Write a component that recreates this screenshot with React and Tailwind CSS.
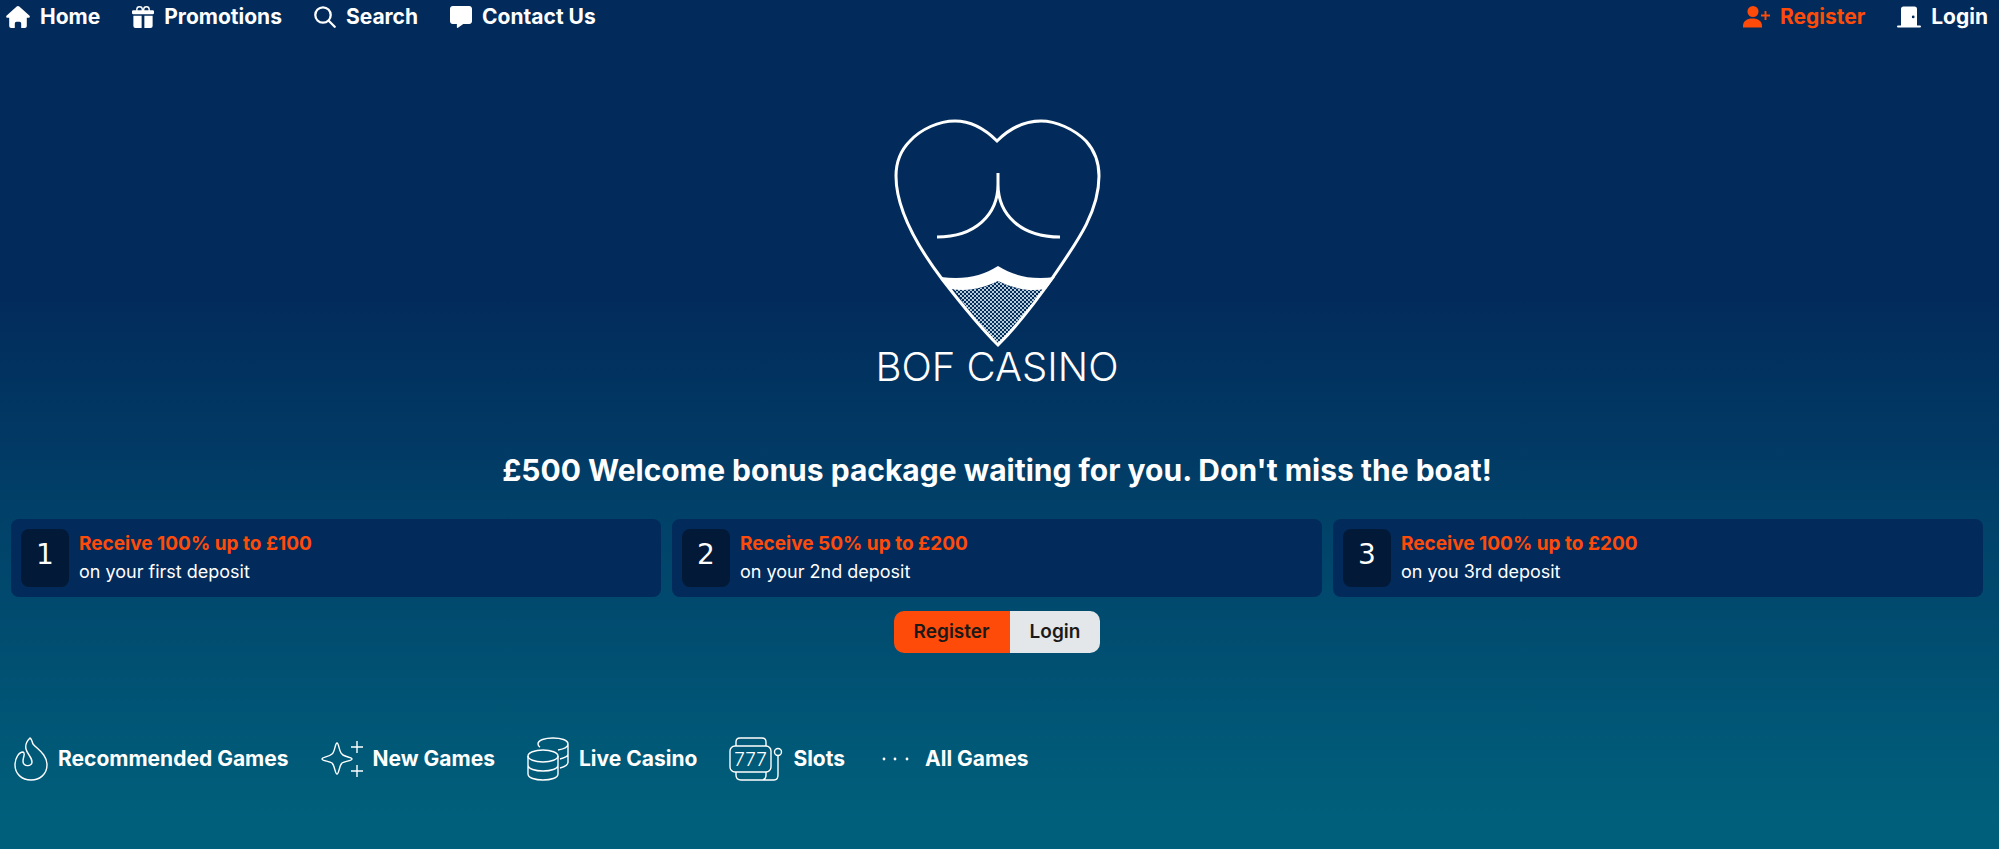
import { BsGiftFill } from "react-icons/bs"
import { FaMessage } from "react-icons/fa6"

const mainLinks = [
  { name: "Home", href: "#home", icon: <HomeIcon /> },
  { name: "Promotions", href: "#promotions", icon: <BsGiftFill size={22} /> },
  { name: "Search", href: "#search", icon: <SearchIcon /> },
  { name: "Contact Us", href: "#contact", icon: <FaMessage size={22} /> }
]

const offers = [
  { step: 1, title: "Receive 100% up to £100", text: "on your first deposit" },
  { step: 2, title: "Receive 50% up to £200", text: "on your 2nd deposit" },
  { step: 3, title: "Receive 100% up to £200", text: "on you 3rd deposit" }
]

const categories = [
  { name: "Recommended Games", href: "#recommended", icon: <FlameIcon /> },
  { name: "New Games", href: "#new", icon: <SparkIcon /> },
  { name: "Live Casino", href: "#live", icon: <ChipsIcon /> },
  { name: "Slots", href: "#slots", icon: <SlotsIcon /> },
  { name: "All Games", href: "#all", icon: <DotsIcon /> }
]

export default function App() {
  return (
    <div className="min-h-screen bg-[linear-gradient(to_bottom,#022b5b_0%,#022b5b_35%,#00607c_97%)] pr-[5px] font-[Inter,sans-serif] text-white">
      <header className="flex h-[34px] items-center justify-between px-1.5">
        <nav className="flex items-center gap-8">
          {mainLinks.map((link) => (
            <NavItem key={link.name} href={link.href} icon={link.icon}>
              {link.name}
            </NavItem>
          ))}
        </nav>
        <nav className="flex items-center gap-8">
          <NavItem href="#register" icon={<PersonPlusIcon />} accent>
            Register
          </NavItem>
          <NavItem href="#login" icon={<DoorIcon />}>
            Login
          </NavItem>
        </nav>
      </header>

      <main>
        <div className="flex flex-col items-center pt-[78px]">
          <Logo />
          <p className="text-[40px] leading-[38px] font-light">BOF CASINO</p>
        </div>

        <h1 className="mt-16 text-center text-3xl leading-10 font-bold">
          £500 Welcome bonus package waiting for you. Don't miss the boat!
        </h1>

        <section className="mt-7 grid grid-cols-3 gap-[11px] px-[11px] pt-px">
          {offers.map((offer) => (
            <OfferCard key={offer.step} {...offer} />
          ))}
        </section>

        <div className="mt-3.5 flex justify-center">
          <div className="flex overflow-hidden rounded-[10px] text-[19px] font-semibold text-[#1c1917]">
            <button className="h-[42px] bg-[#ff4b09] px-5">Register</button>
            <button className="h-[42px] bg-[#e3e7ea] px-5">Login</button>
          </div>
        </div>

        <nav className="mt-21 flex items-center gap-8 px-3.5 pb-16">
          {categories.map((category) => (
            <a key={category.name} href={category.href} className="flex items-center gap-2.5 text-[21px] font-bold">
              {category.icon}
              <span>{category.name}</span>
            </a>
          ))}
        </nav>
      </main>
    </div>
  )
}

function NavItem({ href, icon, children, accent }) {
  return (
    <a href={href} className={`flex items-center gap-2.5 text-[21px] font-bold ${accent ? "text-[#ff4b09]" : "text-white"}`}>
      {icon}
      <span>{children}</span>
    </a>
  )
}

function OfferCard({ step, title, text }) {
  return (
    <div className="flex items-center gap-2.5 rounded-lg bg-[#022b5b] px-2.5 py-2.5">
      <div className="flex h-[58px] w-12 items-center justify-center rounded-lg bg-[#021a38] pb-1.5 font-[DejaVu_Sans,sans-serif] text-[28px]">
        {step}
      </div>
      <div>
        <p className="text-[19px] leading-7 font-bold text-[#ff4b09]">{title}</p>
        <p className="text-lg leading-7">{text}</p>
      </div>
    </div>
  )
}

function Logo() {
  return (
    <svg width="288" height="236" viewBox="0 0 288 236" fill="none" stroke="white" strokeWidth="3" aria-hidden="true">
      <defs>
        <pattern id="lace" width="4" height="4" patternUnits="userSpaceOnUse">
          <path d="M0 0l4 4M4 0L0 4" strokeWidth="1" stroke="#b6cbd6" />
        </pattern>
      </defs>
      <path d="M100 176C118 180 132 176 145 169C158 176 172 180 192 176L176 198L145 232L114 196Z" fill="url(#lace)" stroke="none" />
      <path d="M88 165C112 168 129 164 145 154C161 164 178 168 202 165L193 177C174 180 160 176 145 169C130 176 116 180 98 177Z" fill="white" stroke="none" />
      <path d="M144 29C132 17 118 9 102 9C86 9 68 17 57 29C47 39 43 50 43 64C43 98 64 134 89 167C106 189 125 213 145 233C166 212 184 188 200 165C224 130 246 100 246 64C246 50 242 39 233 29C221 17 203 9 188 9C171 9 156 17 144 29Z" />
      <path d="M145 61V72C145 103 122 125 84 125M145 72C145 103 168 125 207 125" />
    </svg>
  )
}

function HomeIcon() {
  return (
    <svg width="24" height="22" viewBox="0 0 24 22" fill="currentColor">
      <path d="M10.700 .6Q12 -.5 13.300 .6L23.300 9.500Q24.600 11 22.800 11.800H20.800V20Q20.800 22 18.800 22H15.200V17.500Q15.200 15.700 13.500 15.700H10.500Q8.800 15.700 8.800 17.500V22H5.200Q3.200 22 3.200 20V11.800H1.200Q-.6 11 .7 9.500Z" />
    </svg>
  )
}

function SearchIcon() {
  return (
    <svg width="22" height="22" viewBox="0 0 22 22" fill="none" stroke="currentColor" strokeWidth="2.3" strokeLinecap="round">
      <circle cx="9" cy="9" r="7.700" />
      <path d="M14.700 14.700L20.700 20.700" />
    </svg>
  )
}

function PersonPlusIcon() {
  return (
    <svg width="27" height="22" viewBox="0 0 27 22" fill="currentColor">
      <circle cx="10" cy="5.500" r="5.500" />
      <path d="M0 20C0 15 4 12.500 9.500 12.500C15 12.500 19 15 19 20V21.500H0Z" />
      <path d="M22.500 5V14M18 9.500H27" stroke="currentColor" strokeWidth="1.900" />
    </svg>
  )
}

function DoorIcon() {
  return (
    <svg width="24" height="22" viewBox="0 0 24 22" fill="currentColor">
      <path fillRule="evenodd" d="M4 19.500V3Q4 .5 6.500 .5H17.500Q20 .5 20 3V19.500H23Q24 19.500 24 20.500Q24 21.500 23 21.500H1Q0 21.500 0 20.500Q0 19.500 1 19.500ZM16.200 9.500A1.400 1.400 0 1 0 16.200 12.300A1.400 1.400 0 1 0 16.200 9.500Z" />
    </svg>
  )
}

function FlameIcon() {
  return (
    <svg width="34" height="44" viewBox="0 0 34 44" fill="none" stroke="white" strokeWidth="1.4">
      <path d="M16 1C13 4 11 8 12 12C13 17 18 20 18 25C18 30 9 30 9 24C9 20 12 16 9 15C5 15 1 21 1 28C1 37 8 43 17 43C26 43 33 37 33 28C33 17 23 12 19 7C18 5 18 2 16 1Z" />
    </svg>
  )
}

function SparkIcon() {
  return (
    <svg width="42" height="36" viewBox="0 0 42 36" fill="none" stroke="white" strokeWidth="1.4">
      <path d="M16 2C18 2 18 11 21 13C23 16 31 16 31 18C31 20 24 20 21 22C18 25 18 33 16 33C14 33 14 25 11 22C8 20 1 20 1 18C1 16 8 16 11 13C14 11 14 2 16 2ZM36 0V12M30 6H42M36 24V36M30 30H42" />
    </svg>
  )
}

function ChipsIcon() {
  return (
    <svg width="42" height="44" viewBox="0 0 42 44" fill="none" stroke="white" strokeWidth="1.4">
      <ellipse cx="16" cy="19" rx="15" ry="6" />
      <path d="M1 19V37C1 45 31 45 31 37V19M1 28C1 36 31 36 31 28M13 10C11 9 11 8 11 7C11 3 18 1 26 1C34 1 41 3 41 7C41 10 37 12 31 13M41 7V25C41 28 37 30 33 31M41 17C41 19 37 21 33 22" />
    </svg>
  )
}

function SlotsIcon() {
  return (
    <svg width="54" height="44" viewBox="0 0 54 44" fill="none" stroke="white" strokeWidth="1.4">
      <rect x="1" y="9" width="41" height="26" rx="5" />
      <path d="M7 9V5C7 2 9 1 11 1H33C36 1 37 3 37 5V9M7 35V38C7 41 9 43 12 43H32C35 43 37 41 37 38V35M32 43H45C48 43 49 41 49 38V19" />
      <circle cx="49" cy="15" r="3.500" />
      <text x="21.500" y="29" textAnchor="middle" fill="white" stroke="none" className="font-[Inter,sans-serif] text-[19px] font-light">
        777
      </text>
    </svg>
  )
}

function DotsIcon() {
  return (
    <svg width="38" height="44" viewBox="0 0 38 44" fill="white">
      <circle cx="7" cy="22" r="1.4" />
      <circle cx="18" cy="22" r="1.4" />
      <circle cx="30" cy="22" r="1.4" />
    </svg>
  )
}
